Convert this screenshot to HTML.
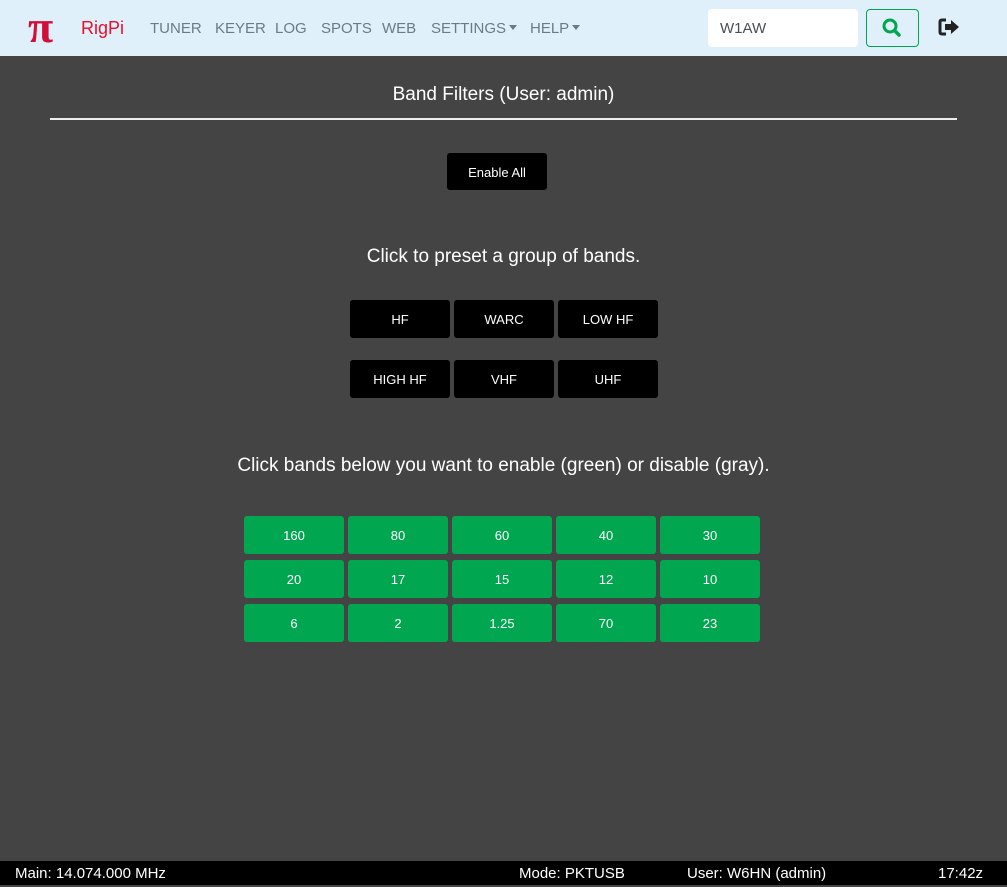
<!DOCTYPE html>
<html><head><style>
*{box-sizing:border-box;margin:0;padding:0}
body{width:1007px;height:885px;background:#444;font-family:"Liberation Sans",sans-serif;position:relative;overflow:hidden;color:#fff}
.nav{position:absolute;left:0;top:0;width:1007px;height:56px;background:#dff0fb}
.a{position:absolute;font-size:15px;color:#6c7a86;top:20px}
.btn{position:absolute;border-radius:3px;font-size:13px;text-align:center;color:#fff}
.k{background:#000;width:100px;height:38px;line-height:40px}
.g{background:#00a650;width:100px;height:38px;line-height:40px}
.caret{display:inline-block;border-left:4px solid transparent;border-right:4px solid transparent;border-top:5px solid #6c7a86;vertical-align:3px;margin-left:3px}
</style></head><body>
<div class="nav">
<div style="position:absolute;left:28px;top:4px;font-family:'Liberation Serif',serif;font-size:46px;line-height:46px;color:#d0103a;font-weight:bold">π</div>
<div style="position:absolute;left:81px;top:18px;font-size:18px;color:#e8102a">RigPi</div>
<div class="a" style="left:150px">TUNER</div>
<div class="a" style="left:215px">KEYER</div>
<div class="a" style="left:275px">LOG</div>
<div class="a" style="left:321px">SPOTS</div>
<div class="a" style="left:382px">WEB</div>
<div class="a" style="left:431px">SETTINGS<span class="caret"></span></div>
<div class="a" style="left:530px">HELP<span class="caret"></span></div>
<div style="position:absolute;left:708px;top:9px;width:150px;height:38px;background:#fff;border-radius:4px;color:#495057;font-size:15px;line-height:40px;padding-left:12px">W1AW</div>
<div style="position:absolute;left:866px;top:9px;width:53px;height:38px;border:1px solid #00a650;border-radius:4px">
<svg width="53" height="38" viewBox="0 0 53 38" style="position:absolute;left:-1px;top:-1px"><circle cx="24" cy="17" r="6" fill="none" stroke="#00a650" stroke-width="3"/><line x1="28.5" y1="21.5" x2="33" y2="26" stroke="#00a650" stroke-width="3.5" stroke-linecap="round"/></svg></div>
<svg style="position:absolute;left:938px;top:17px" width="22" height="20" viewBox="0 0 22 20"><path d="M8 3H4Q2 3 2 5V15Q2 17 4 17H8" fill="none" stroke="#222" stroke-width="3"/><path d="M7 7H13V3L21 10L13 17V13H7Z" fill="#222"/></svg>
</div>
<div style="position:absolute;left:0;width:1007px;top:84px;text-align:center;font-size:19px">Band Filters (User: admin)</div>
<div style="position:absolute;left:50px;top:118px;width:907px;height:2px;background:#eee"></div>
<div class="btn k" style="left:447px;top:153px;height:37px;line-height:39px">Enable All</div>
<div style="position:absolute;left:0;width:1007px;top:246px;text-align:center;font-size:19px">Click to preset a group of bands.</div>
<div class="btn k" style="left:350px;top:300px">HF</div>
<div class="btn k" style="left:454px;top:300px">WARC</div>
<div class="btn k" style="left:558px;top:300px">LOW HF</div>
<div class="btn k" style="left:350px;top:360px">HIGH HF</div>
<div class="btn k" style="left:454px;top:360px">VHF</div>
<div class="btn k" style="left:558px;top:360px">UHF</div>
<div style="position:absolute;left:0;width:1007px;top:455px;text-align:center;font-size:19px">Click bands below you want to enable (green) or disable (gray).</div>
<div class="btn g" style="left:244px;top:516px">160</div>
<div class="btn g" style="left:348px;top:516px">80</div>
<div class="btn g" style="left:452px;top:516px">60</div>
<div class="btn g" style="left:556px;top:516px">40</div>
<div class="btn g" style="left:660px;top:516px">30</div>
<div class="btn g" style="left:244px;top:560px">20</div>
<div class="btn g" style="left:348px;top:560px">17</div>
<div class="btn g" style="left:452px;top:560px">15</div>
<div class="btn g" style="left:556px;top:560px">12</div>
<div class="btn g" style="left:660px;top:560px">10</div>
<div class="btn g" style="left:244px;top:604px">6</div>
<div class="btn g" style="left:348px;top:604px">2</div>
<div class="btn g" style="left:452px;top:604px">1.25</div>
<div class="btn g" style="left:556px;top:604px">70</div>
<div class="btn g" style="left:660px;top:604px">23</div>
<div style="position:absolute;left:0;top:861px;width:1007px;height:24px;background:#000;font-size:15px;line-height:26px">
<span style="position:absolute;left:15px">Main: 14.074.000 MHz</span>
<span style="position:absolute;left:519px">Mode: PKTUSB</span>
<span style="position:absolute;left:687px">User: W6HN (admin)</span>
<span style="position:absolute;left:938px">17:42z</span>
</div>
</body></html>
